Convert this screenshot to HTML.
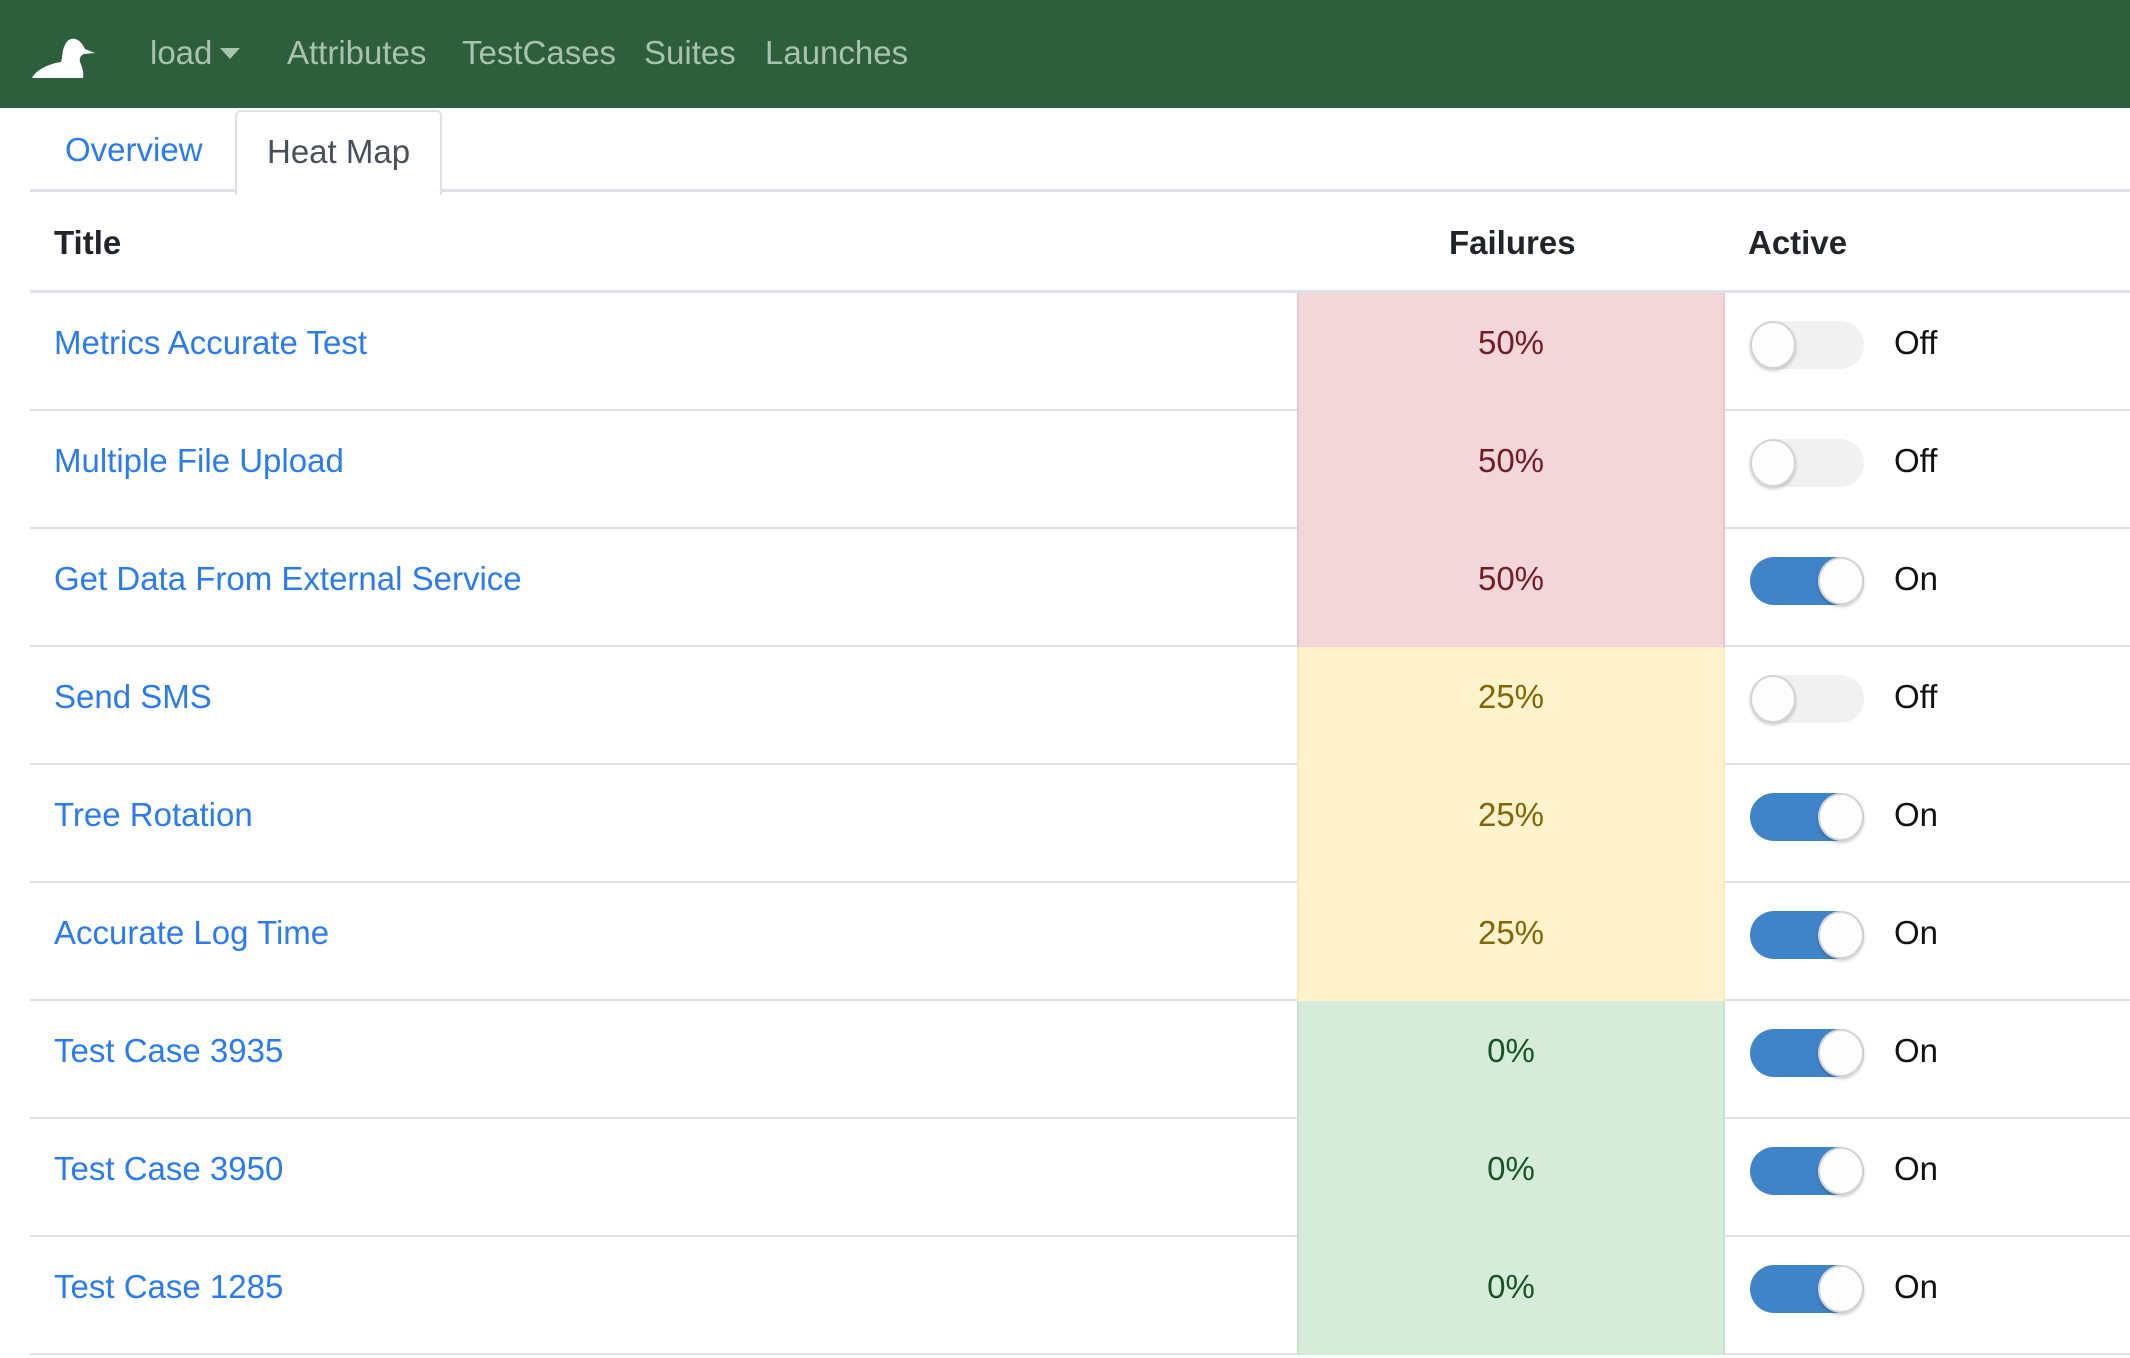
<!DOCTYPE html>
<html><head><meta charset="utf-8"><style>
*{box-sizing:border-box;margin:0;padding:0}
body{width:2130px;height:1358px;overflow:hidden;background:#fff;font-family:"Liberation Sans",Arial,sans-serif;color:#212529}
.nav{position:absolute;left:0;top:0;width:2130px;height:108px;background:#2d5f3c}
.nav span{position:absolute;top:34px;font-size:33px;color:#a9c2ae}
.tabs{position:absolute;left:30px;top:108px;width:2100px;height:84px;border-bottom:3px solid #dee2e6}
.tab1{position:absolute;left:35px;top:23px;font-size:33px;color:#2a7bf0}
.tab2{position:absolute;left:205px;top:2px;width:207px;height:85px;border:2px solid #dee2e6;border-bottom:none;border-radius:6px 6px 0 0;background:#fff;font-size:33px;color:#495057;padding:21px 0 0 30px}
.th{position:absolute;top:224px;font-size:33px;font-weight:bold}
.hb{position:absolute;left:30px;top:290px;width:2100px;height:3px;background:#dee2e6}
.row{position:absolute;left:30px;width:2100px;height:118px;border-bottom:2px solid #dee2e6}
.row .t{position:absolute;left:24px;top:31px;font-size:33px;color:#2a7bf0}
.row .f{position:absolute;left:1267px;top:0;width:428px;height:118px;text-align:center;font-size:33px;padding-top:31px}
.r{background:#f3d6da;color:#721c24;border-left:2px solid #f0c4ca;border-right:2px solid #f0c4ca}
.y{background:#fef3cd;color:#856404;border-left:2px solid #fdebb5;border-right:2px solid #fdebb5}
.g{background:#d7ebda;color:#155724;border-left:2px solid #c6e4cb;border-right:2px solid #c6e4cb}
.tg{position:absolute;left:1720px;top:28px;width:114px;height:48px;border-radius:24px;background:#f1f1f1}
.tg i{position:absolute;top:0;width:46px;height:48px;border-radius:50%;background:#fdfdfd;border:2px solid #d4d4d4;box-shadow:0 2px 3px rgba(0,0,0,.2)}
.off i{left:0}
.on{background:#3f84c9}.on i{left:68px}
.row .s{position:absolute;left:1864px;top:31px;font-size:33px;color:#111}
</style></head><body>
<div class="nav">
<svg style="position:absolute;left:20px;top:20px" width="90" height="70" viewBox="0 0 90 70"><path d="M12 58 C16 50 28 44 41 42 C43 36 42 30 45 25 C47 20 51 18 55 19 C60 20 63 25 65 29 L75 33 L64 34 C61 35 59 38 60 42 C62 47 64 52 63 58 Z" fill="#fff"/></svg>
<span style="left:150px">load</span>
<svg style="position:absolute;left:220px;top:48px" width="20" height="12"><path d="M0 0 L20 0 L10 11Z" fill="#a9c2ae"/></svg>
<span style="left:287px">Attributes</span>
<span style="left:462px">TestCases</span>
<span style="left:644px">Suites</span>
<span style="left:765px">Launches</span>
</div>
<div class="tabs"><div class="tab1">Overview</div><div class="tab2">Heat Map</div></div>
<div class="th" style="left:54px">Title</div>
<div class="th" style="left:1449px">Failures</div>
<div class="th" style="left:1748px">Active</div>
<div class="hb"></div>
<div class="row" style="top:293px"><div class="t">Metrics Accurate Test</div><div class="f r">50%</div><div class="tg off"><i></i></div><div class="s">Off</div></div>
<div class="row" style="top:411px"><div class="t">Multiple File Upload</div><div class="f r">50%</div><div class="tg off"><i></i></div><div class="s">Off</div></div>
<div class="row" style="top:529px"><div class="t">Get Data From External Service</div><div class="f r">50%</div><div class="tg on"><i></i></div><div class="s">On</div></div>
<div class="row" style="top:647px"><div class="t">Send SMS</div><div class="f y">25%</div><div class="tg off"><i></i></div><div class="s">Off</div></div>
<div class="row" style="top:765px"><div class="t">Tree Rotation</div><div class="f y">25%</div><div class="tg on"><i></i></div><div class="s">On</div></div>
<div class="row" style="top:883px"><div class="t">Accurate Log Time</div><div class="f y">25%</div><div class="tg on"><i></i></div><div class="s">On</div></div>
<div class="row" style="top:1001px"><div class="t">Test Case 3935</div><div class="f g">0%</div><div class="tg on"><i></i></div><div class="s">On</div></div>
<div class="row" style="top:1119px"><div class="t">Test Case 3950</div><div class="f g">0%</div><div class="tg on"><i></i></div><div class="s">On</div></div>
<div class="row" style="top:1237px"><div class="t">Test Case 1285</div><div class="f g">0%</div><div class="tg on"><i></i></div><div class="s">On</div></div>
</body></html>
